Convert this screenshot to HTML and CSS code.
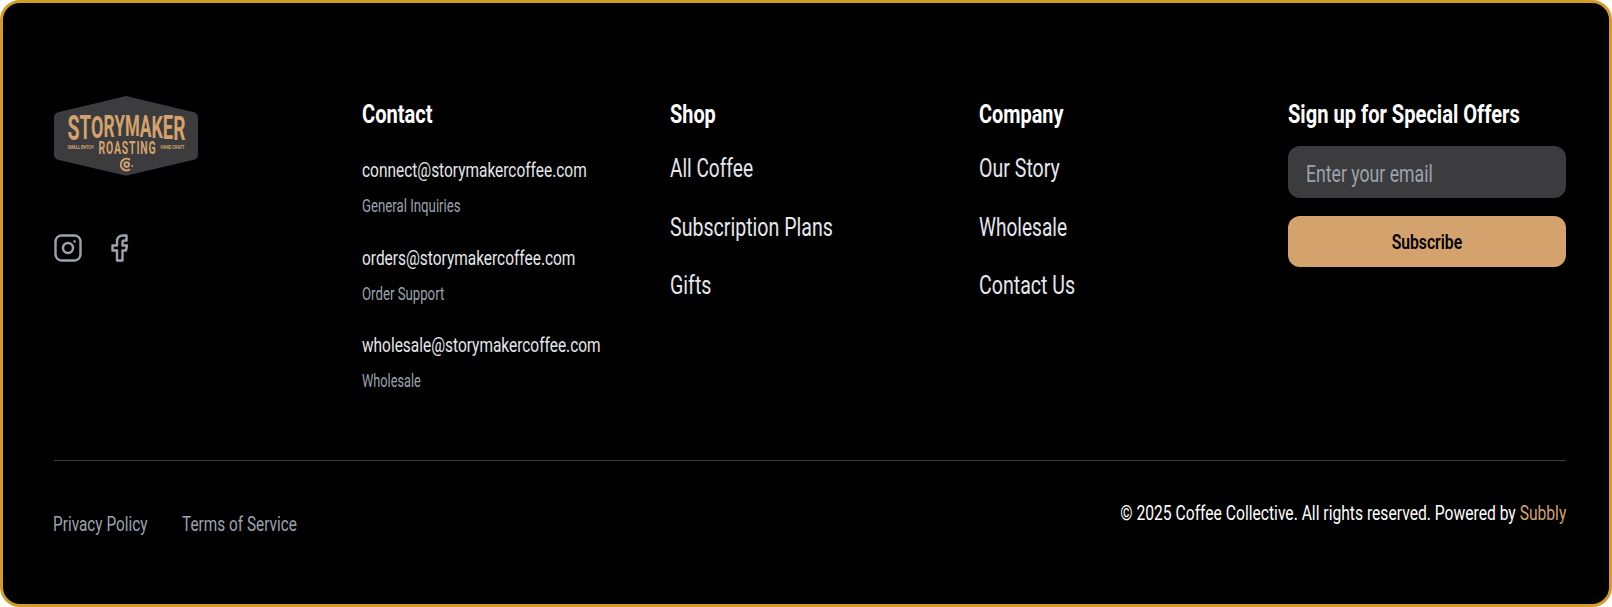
FILE: index.html
```
<!DOCTYPE html>
<html lang="en">
<head>
    <meta charset="UTF-8">
    <meta name="viewport" content="width=device-width, initial-scale=1.0">
    <title>Storymaker Roasting</title>
    <link rel="stylesheet" href="styles.css">
</head>
<body>
    <footer class="footer">
        <div class="footer-grid">
            <div class="brand">
                <svg class="logo" viewBox="0 0 144 80" role="img" aria-label="Storymaker Roasting">
                    <path d="M69 .7Q72 -.5 75 .7L140 16.200Q144 17.500 144 21.500V59Q144 62.500 140 63.800L75 79Q72 80 69 79L4 63.800Q0 62.500 0 59V21.500Q0 17.500 4 16.200Z" fill="#3c3c3e"/>
                    <g fill="#d4a26c">
                        <text class="logo-name" x="13.500" y="43.700" textLength="118" lengthAdjust="spacingAndGlyphs"><tspan font-size="35">S</tspan><tspan dy="-1" font-size="33">T</tspan><tspan dy="-1" font-size="32">O</tspan><tspan dy="-1" font-size="31">R</tspan><tspan dy="-1" font-size="30">Y</tspan><tspan font-size="30">M</tspan><tspan dy="1" font-size="31">A</tspan><tspan dy="1" font-size="32">K</tspan><tspan dy="1" font-size="33">E</tspan><tspan dy="1" font-size="34">R</tspan></text>
                        <text class="logo-sub" x="44.500" y="57.700" textLength="58" lengthAdjust="spacingAndGlyphs">ROASTING</text>
                        <text class="logo-tag" x="13.500" y="53" textLength="26" lengthAdjust="spacingAndGlyphs">SMALL BATCH</text>
                        <text class="logo-tag" x="106.500" y="53" textLength="24" lengthAdjust="spacingAndGlyphs">HAND CRAFT</text>
                    </g>
                    <g fill="none" stroke="#d4a26c" stroke-width="2">
                        <path d="M76 63.900A5.800 5.800 0 1 0 76 73.300"/>
                        <circle cx="72.700" cy="68.600" r="2.300"/>
                    </g>
                    <circle cx="78.300" cy="70" r=".9" fill="#d4a26c"/>
                </svg>
                <div class="social">
                    <a href="#" aria-label="Instagram">
                        <svg class="icon" viewBox="0 0 28 28">
                            <rect x="1.500" y="1.500" width="25" height="25" rx="6"/>
                            <circle cx="14" cy="14" r="5"/>
                            <circle class="dot" cx="20.500" cy="7.500" r="1.300"/>
                        </svg>
                    </a>
                    <a href="#" aria-label="Facebook">
                        <svg class="icon" viewBox="0 0 28 28">
                            <path d="M20.500 1.500h-3.500q-6 0-6 6v4H6.500v5H11v10h5.500v-10h3.500l1-5h-4.500v-3q0-2 2-2h2z"/>
                        </svg>
                    </a>
                </div>
            </div>

            <div class="contact">
                <h3><span>Contact</span></h3>
                <a class="mail" href="#"><span>connect@storymakercoffee.com</span></a>
                <p><span>General Inquiries</span></p>
                <a class="mail" href="#"><span>orders@storymakercoffee.com</span></a>
                <p><span>Order Support</span></p>
                <a class="mail" href="#"><span>wholesale@storymakercoffee.com</span></a>
                <p><span class="tight">Wholesale</span></p>
            </div>

            <div class="links">
                <h3><span>Shop</span></h3>
                <a href="#"><span class="tight">All Coffee</span></a>
                <a href="#"><span>Subscription Plans</span></a>
                <a href="#"><span>Gifts</span></a>
            </div>

            <div class="links">
                <h3><span>Company</span></h3>
                <a href="#"><span>Our Story</span></a>
                <a href="#"><span class="tight">Wholesale</span></a>
                <a href="#"><span>Contact Us</span></a>
            </div>

            <form class="signup">
                <h3><span>Sign up for Special Offers</span></h3>
                <label class="field"><span>Enter your email</span></label>
                <button type="button"><span>Subscribe</span></button>
            </form>
        </div>

        <div class="footer-bottom">
            <nav class="legal">
                <a href="#"><span>Privacy Policy</span></a>
                <a href="#"><span>Terms of Service</span></a>
            </nav>
            <p class="copyright"><span>© 2025 Coffee Collective. All rights reserved. Powered by <a href="#">Subbly</a></span></p>
        </div>
    </footer>
</body>
</html>
```
FILE: styles.css
```
* {
    box-sizing: border-box;
}

body {
    --narrow: 0.768;
    margin: 0;
    background: #fff;
    font-family: Roboto, "Liberation Sans", sans-serif;
}

.footer {
    height: 607px;
    padding: 93px 43px 0 51px;
    background: #000;
    border: 3px solid #d39b28;
    border-radius: 20px;
}

h3,
p {
    margin: 0;
}

a {
    color: inherit;
    text-decoration: none;
}

/* narrow lettering */
.footer span {
    display: inline-block;
    white-space: nowrap;
    transform: scaleX(var(--narrow));
    transform-origin: left center;
}

.footer-grid {
    display: grid;
    grid-template-columns: repeat(5, 278px);
    column-gap: 30.500px;
    height: 364px;
}

h3 {
    --narrow: 0.788;
    height: 50px;
    font-size: 25.500px;
    font-weight: 700;
    line-height: 37px;
    color: #fff;
}

.contact,
.links {
    margin-left: -1px;
}

.logo {
    display: block;
    width: 144px;
    height: 80px;
}

.logo-name,
.logo-sub {
    font-weight: 700;
}

.logo-sub {
    font-size: 18.500px;
    letter-spacing: 1.500px;
}

.logo-tag {
    font-size: 5px;
    font-weight: 700;
}

.social {
    display: flex;
    gap: 24px;
    margin-top: 58px;
}

.icon {
    display: block;
    width: 28px;
    height: 28px;
    fill: none;
    stroke: #9ca3af;
    stroke-width: 2.400;
    stroke-linejoin: round;
}

.icon .dot {
    fill: #9ca3af;
    stroke: none;
}

.contact h3 {
    height: 59px;
}

.contact a {
    --narrow: 0.772;
    display: block;
    height: 37px;
    font-size: 20px;
    line-height: 30px;
    color: #e5e7eb;
}

.contact p {
    --narrow: 0.755;
    height: 50.500px;
    font-size: 17.500px;
    line-height: 28px;
    color: #9ca3af;
}

.links h3 {
    --narrow: 0.78;
    height: 54px;
}

.links a {
    display: block;
    height: 58.700px;
    font-size: 25.500px;
    line-height: 36px;
    color: #e5e7eb;
}

.links .tight {
    --narrow: 0.748;
}

.contact .tight {
    --narrow: 0.728;
}

.field {
    display: block;
    height: 52px;
    margin-bottom: 17.500px;
    padding-left: 18px;
    border-radius: 12px;
    background: #3c3c3e;
    font-size: 23px;
    line-height: 57px;
    color: #9ca3af;
}

.signup button {
    --narrow: 0.785;
    display: block;
    width: 100%;
    height: 51px;
    padding: 0;
    border: 0;
    border-radius: 12px;
    background: #d4a26c;
    color: #000;
    font: 600 20px/53px Roboto, sans-serif;
}

.signup button span {
    transform-origin: center;
}

.footer-bottom {
    display: flex;
    justify-content: space-between;
    width: 1512px;
    border-top: 1px solid #3c3c3e;
}

.legal {
    display: flex;
    gap: 6px;
    margin-left: -1px;
    padding-top: 48px;
    font-size: 20px;
    line-height: 30px;
    color: #9ca3af;
}

.copyright {
    --narrow: 0.782;
    padding-top: 37px;
    font-size: 20px;
    line-height: 30px;
    color: #fff;
}

.copyright span {
    transform-origin: right center;
}

.copyright a {
    color: #d4a26c;
}
```
